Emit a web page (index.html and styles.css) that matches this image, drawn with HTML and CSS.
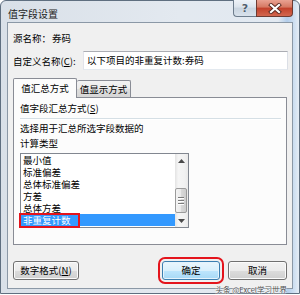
FILE: index.html
```html
<!DOCTYPE html>
<html lang="zh-CN">
<head>
<meta charset="utf-8">
<link rel="stylesheet" href="styles.css">
</head>
<body>
<div class="window">
  <div class="titlebar">
    <span class="title">值字段设置</span>
    <div class="caption-btns">
      <div class="cbtn help">?</div>
      <div class="cbtn close">
        <svg width="14" height="11" viewBox="0 0 14 11">
          <path d="M3 2 L11 9 M11 2 L3 9" stroke="#5a2a22" stroke-width="4" stroke-linecap="square"/>
          <path d="M3 2 L11 9 M11 2 L3 9" stroke="#ffffff" stroke-width="2.2" stroke-linecap="square"/>
        </svg>
      </div>
    </div>
  </div>
  <div class="client">
    <div class="row source"><span class="label">源名称：</span><span class="value">券码</span></div>
    <div class="row custom"><span class="label">自定义名称(<u>C</u>):</span><div class="input">以下项目的非重复计数:券码</div></div>
    <div class="tabs">
      <div class="tab active">值汇总方式</div>
      <div class="tab">值显示方式</div>
    </div>
    <div class="panel">
      <div class="group-title">值字段汇总方式(<u>S</u>)</div>
      <div class="sep"></div>
      <div class="desc">选择用于汇总所选字段数据的<br>计算类型</div>
      <div class="listbox">
        <div class="items">
          <div class="item">最小值</div>
          <div class="item">标准偏差</div>
          <div class="item">总体标准偏差</div>
          <div class="item">方差</div>
          <div class="item">总体方差</div>
          <div class="item selected">非重复计数<div class="mark"></div></div>
        </div>
        <div class="scrollbar">
          <div class="sb-btn"><svg width="7" height="4" viewBox="0 0 7 4"><path d="M0 4 L3.5 0 L7 4 Z" fill="#4a4a4a"/></svg></div>
          <div class="track"><div class="thumb"><span></span><span></span><span></span></div></div>
          <div class="sb-btn"><svg width="7" height="4" viewBox="0 0 7 4"><path d="M0 0 L3.5 4 L7 0 Z" fill="#4a4a4a"/></svg></div>
        </div>
      </div>
    </div>
    <div class="buttons">
      <div class="btn wide">数字格式(<u>N</u>)</div>
      <div class="btn-group">
        <div class="btn default">确定</div>
        <div class="btn">取消</div>
      </div>
    </div>
  </div>
  <div class="watermark">头条 @Excel学习世界</div>
</div>
</body>
</html>
```
FILE: styles.css
```css
html, body {
  margin: 0;
  padding: 0;
  background: #ffffff;
}

.window {
  width: 300px;
  height: 294px;
  box-sizing: border-box;
  border: 1px solid #5f6f80;
  border-radius: 6px 6px 0 0;
  background: linear-gradient(90deg, #d9e0e8 0%, #e3e9f0 60%, #e2e9f1 93%, #b3cdea 96%, #c9dcf0 98%, #e6edf5 100%);
  padding: 0 6px 4px 6px;
  display: flex;
  flex-direction: column;
  position: relative;
  font-family: "Noto Sans CJK SC", "Microsoft YaHei", sans-serif;
  font-size: 9.5px;
  color: #000;
}

.titlebar {
  height: 21px;
  flex: none;
  display: flex;
  justify-content: space-between;
  align-items: flex-start;
}

.title {
  margin-top: 3px;
  padding-left: 1px;
  font-size: 10px;
  line-height: 19px;
  color: #1e1e1e;
}

.caption-btns {
  display: flex;
  margin-top: -1px;
}

.cbtn {
  height: 17px;
  box-sizing: border-box;
  display: flex;
  align-items: center;
  justify-content: center;
}

.help {
  width: 23px;
  border: 1px solid #6d7c8c;
  border-right: none;
  border-top: none;
  border-radius: 0 0 0 4px;
  background: linear-gradient(#eef2f7, #dbe3ec 45%, #c9d4e0 50%, #d9e2ec);
  color: #4f5d6d;
  font-family: "DejaVu Sans", sans-serif;
  font-weight: bold;
  font-size: 11px;
  text-shadow: 0 0 1px #fff;
}

.close {
  width: 37px;
  border: 1px solid #6e3b32;
  border-top: none;
  border-radius: 0 0 4px 0;
  background: linear-gradient(#e9a292, #d57862 45%, #c2402a 50%, #d2674f);
}

.client {
  flex: 1;
  background: #f0f0f0;
  border: 1px solid #8b98a6;
  display: flex;
  flex-direction: column;
  padding: 0 4px 0 5px;
}

.row {
  display: flex;
  align-items: center;
}

.source {
  margin-top: 9px;
  line-height: 12px;
}

.source .value {
  margin-left: 1px;
}

.custom {
  margin-top: 7px;
  height: 19px;
}

.custom .label {
  width: 70px;
  flex: none;
  line-height: 12px;
}

.input {
  flex: 1;
  height: 19px;
  box-sizing: border-box;
  border: 1px solid #abadb3;
  border-color: #abadb3 #dbdfe6 #e3e9ef #e2e3ea;
  background: #fff;
  padding-left: 3px;
  line-height: 17px;
}

.tabs {
  margin-top: 8px;
  height: 19px;
  display: flex;
  align-items: flex-end;
  position: relative;
  z-index: 2;
}

.tab {
  box-sizing: border-box;
  border: 1px solid #898c95;
  border-bottom: none;
  text-align: center;
  border-radius: 2px 2px 0 0;
}

.tab.active {
  width: 64px;
  height: 20px;
  margin-bottom: -1px;
  background: #fcfcfc;
  line-height: 19px;
}

.tab:not(.active) {
  width: 54px;
  height: 17px;
  border-left: none;
  background: linear-gradient(#f2f2f2, #ebebeb 50%, #dddddd 50%, #d6d6d6);
  line-height: 17px;
}

.panel {
  height: 148px;
  box-sizing: border-box;
  border: 1px solid #898c95;
  background: #fcfcfc;
  margin-right: 1px;
  padding-left: 6px;
  display: flex;
  flex-direction: column;
}

.group-title {
  margin-top: 4px;
  line-height: 12px;
}

.sep {
  margin-top: 4px;
  margin-right: 5px;
  height: 0;
  border-top: 1px solid #d5dfe5;
  border-bottom: 1px solid #ffffff;
}

.desc {
  margin-top: 1px;
  line-height: 15px;
}

.listbox {
  margin-top: 2px;
  width: 169px;
  height: 75px;
  box-sizing: border-box;
  border: 1px solid #828790;
  background: #fff;
  display: flex;
}

.items {
  flex: 1;
  display: flex;
  flex-direction: column;
}

.item {
  height: 12px;
  line-height: 12px;
  padding-left: 2px;
  position: relative;
  white-space: nowrap;
}

.item.selected {
  background: #3399ff;
  color: #fff;
}

.mark {
  position: absolute;
  left: -2px;
  top: -1px;
  width: 61px;
  height: 15px;
  box-sizing: border-box;
  border: 2px solid #e4141c;
}

.scrollbar {
  width: 13px;
  flex: none;
  display: flex;
  flex-direction: column;
  background: linear-gradient(90deg, #e3e3e3, #f5f5f5 25%, #f1f1f1 75%, #e9e9e9);
}

.sb-btn {
  height: 13px;
  flex: none;
  display: flex;
  align-items: center;
  justify-content: center;
}

.track {
  flex: 1;
  display: flex;
  flex-direction: column;
  justify-content: flex-end;
}

.thumb {
  height: 25px;
  margin: 0 1px 1px 0;
  box-sizing: border-box;
  border: 1px solid #9b9b9b;
  border-radius: 2px;
  background: linear-gradient(90deg, #f4f4f4, #e9e9e9 50%, #d9d9d9 50%, #cdcdcd);
  display: flex;
  flex-direction: column;
  align-items: center;
  justify-content: center;
  gap: 1px;
}

.thumb span {
  width: 6px;
  height: 1px;
  background: #7b7b7b;
  border-bottom: 1px solid #fff;
}

.buttons {
  margin-top: 16px;
  display: flex;
  justify-content: space-between;
  margin-right: 1px;
}

.btn-group {
  display: flex;
  gap: 8px;
}

.btn {
  height: 19px;
  box-sizing: border-box;
  border: 1px solid #707070;
  border-radius: 3px;
  background: linear-gradient(#f2f2f2, #ebebeb 50%, #dddddd 50%, #cfcfcf);
  box-shadow: inset 0 0 0 1px #fbfbfb;
  text-align: center;
  line-height: 17px;
  width: 59px;
}

.btn.wide {
  width: 66px;
}

.btn.default {
  width: 58px;
  border-color: #3c7fb1;
  background: linear-gradient(#eaf6fd, #d9f0fc 50%, #bee6fd 50%, #a7d9f5);
  box-shadow: inset 0 0 0 1px #e6f4fc;
  outline: 2px solid #e4141c;
  outline-offset: 2px;
}

.watermark {
  position: absolute;
  right: 12px;
  bottom: -1px;
  font-size: 7.5px;
  line-height: 8px;
  color: #4e4e4e;
  text-shadow: 0 0 1px #fff, 0 0 1px #fff, 0 0 2px #fff;
}
```
